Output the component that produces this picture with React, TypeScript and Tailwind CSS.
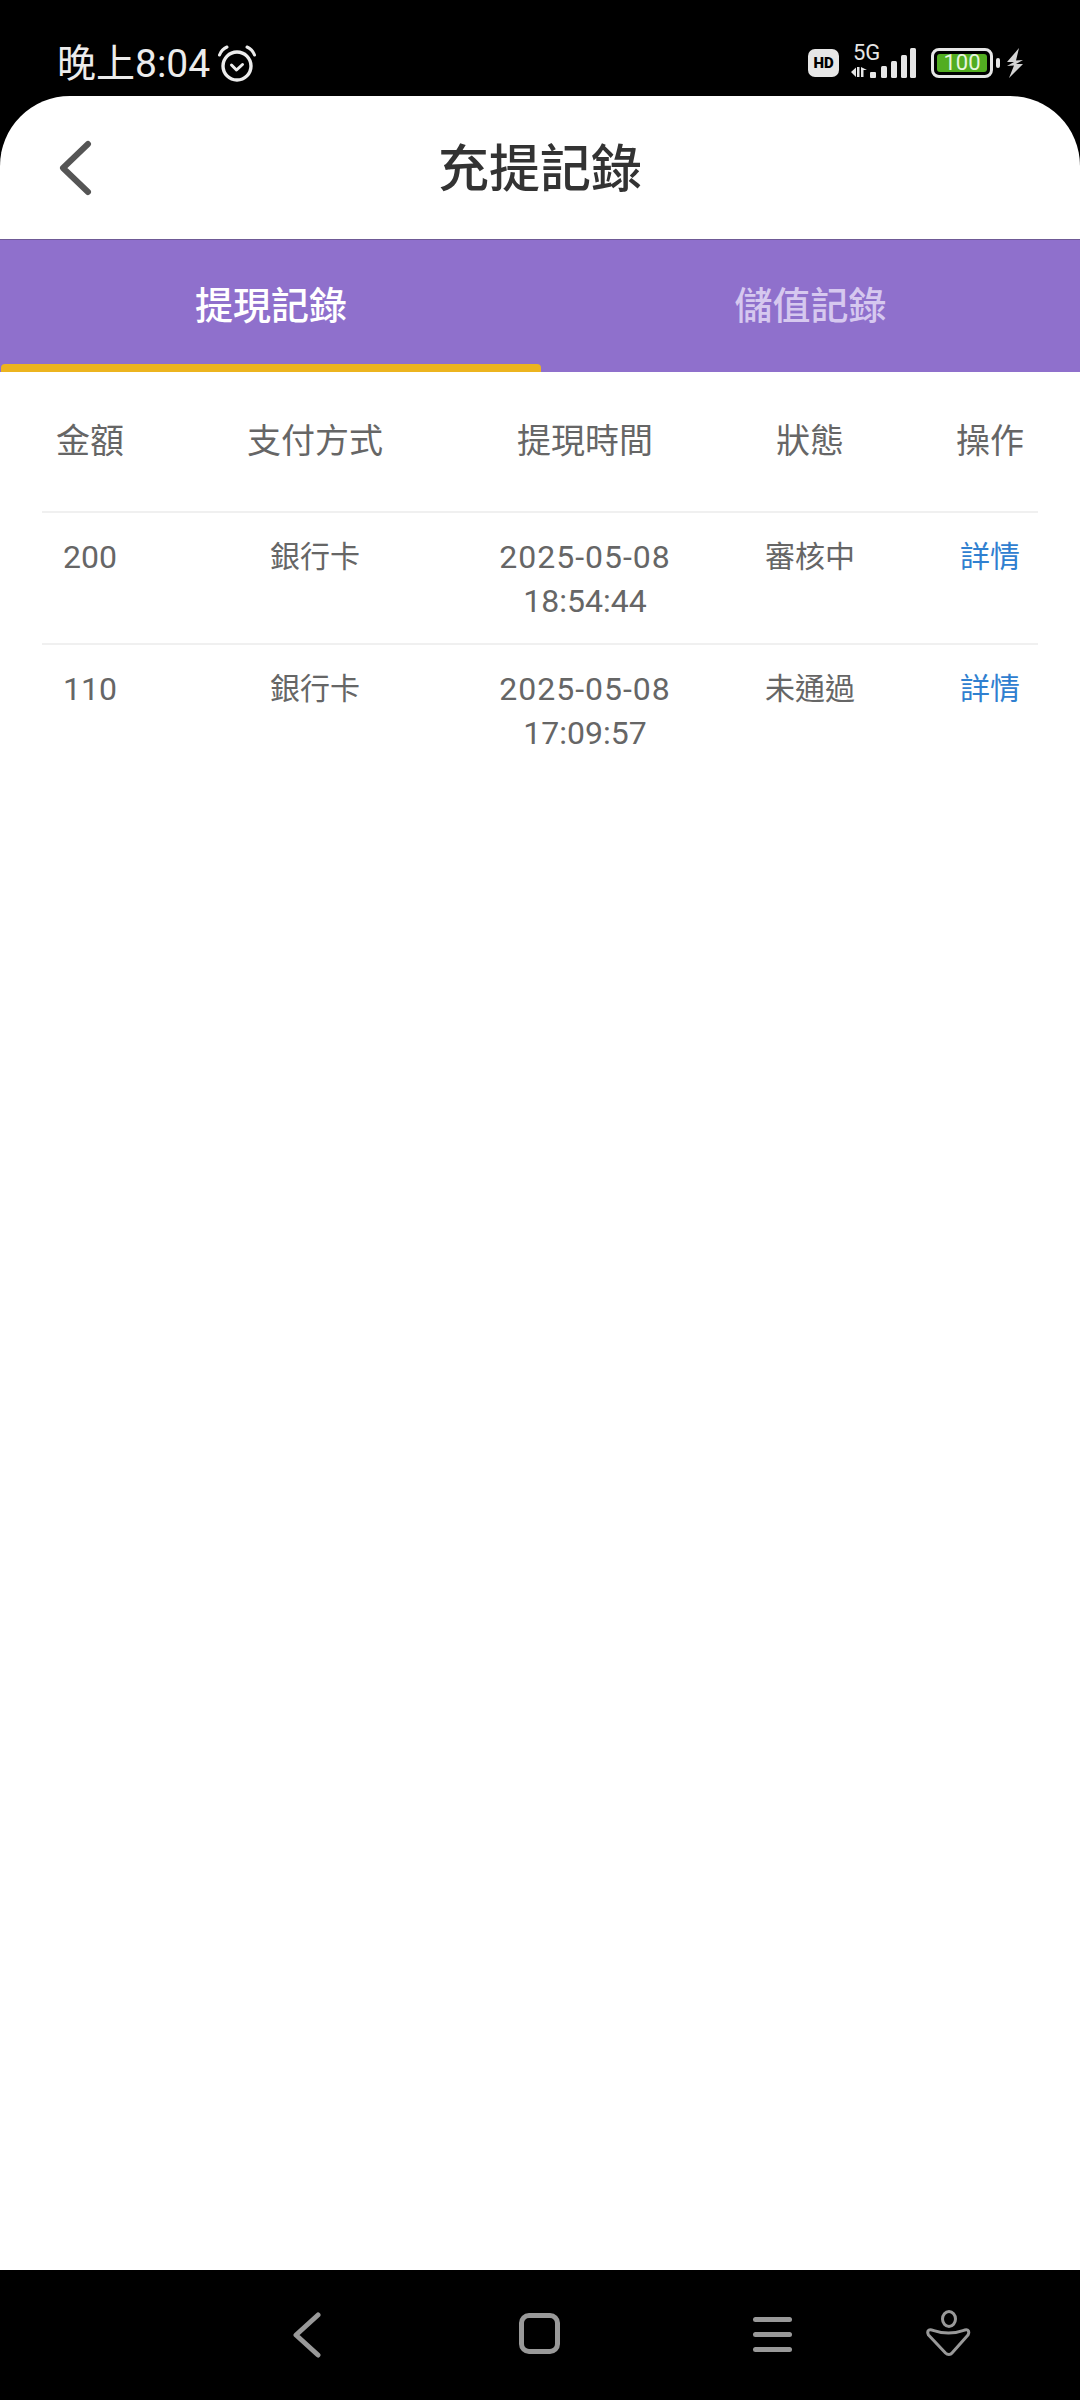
import React from 'react';

const FONT = 'font-["Roboto","Noto_Sans_CJK_TC",sans-serif]';

// status bar icons
const AlarmIcon = () => (
  <svg width="40" height="40" viewBox="0 0 40 40" fill="none" stroke="#ececec" strokeLinecap="round">
    <circle cx="20" cy="22" r="14" strokeWidth="3.4" />
    <path d="M14.500 21l5 5 6-5.500" strokeWidth="3" strokeLinejoin="round" />
    <path d="M2.500 11C4 7 6.500 4.500 10 3M37.500 11C36 7 33.500 4.500 30 3" strokeWidth="3" />
  </svg>
);

const SignalIcon = () => (
  <svg width="66" height="32" viewBox="0 0 66 32" fill="#e6e6e6">
    <path d="M0 25l5-4.500V30zM6 20v10h2.500V20zM10 20v10h2.500v-7h3.500z" />
    <rect x="19" y="25" width="6" height="6" rx="1" />
    <rect x="30" y="19" width="6" height="12" rx="1.500" />
    <rect x="40" y="14" width="6" height="17" rx="1.500" />
    <rect x="50" y="8" width="6" height="23" rx="1.500" />
    <rect x="59" y="1" width="6" height="30" rx="1.500" />
  </svg>
);

const BoltIcon = () => (
  <svg width="18" height="30" viewBox="0 0 18 30" fill="#d4d4d4">
    <path d="M13 0L1 14l7 0-7 4 7-.500L3 30 17 16l-7 0 7-4-7 .500z" />
  </svg>
);

const StatusBar = () => (
  <div className="h-[96px] shrink-0 flex items-start justify-between pl-[57px] pr-[56px] pt-[44px]">
    <div className="flex items-center gap-[7px]">
      <span className="text-[39px] leading-[38px] text-[#ececec]">晚上8:04</span>
      <AlarmIcon />
    </div>
    <div className="flex items-center pt-[3px]">
      <div className="w-[31px] h-[28px] rounded-[7px] bg-[#e6e6e6] flex items-center justify-center text-[15px] leading-none font-black text-black">
        HD
      </div>
      <div className="relative w-[66px] h-[32px] ml-[12px]">
        <SignalIcon />
        <span className="absolute left-[2px] top-[-4px] text-[22px] leading-[20px] text-[#e6e6e6]">5G</span>
      </div>
      <div className="ml-[14px] w-[62px] h-[30px] rounded-[8px] border-[3px] border-[#e6e6e6] p-[3px] flex">
        <div className="flex-1 rounded-[3px] bg-[#52ad21] flex items-center justify-center text-[22px] leading-none text-[#e8f6df]">
          100
        </div>
      </div>
      <div className="ml-[3px] w-[4px] h-[10px] rounded-[2px] bg-[#e6e6e6]" />
      <div className="ml-[6px] flex">
        <BoltIcon />
      </div>
    </div>
  </div>
);

const Header = () => (
  <div className="h-[144px] shrink-0 relative flex items-center justify-center border-b border-[#6f5a96] pt-[5px]">
    <svg className="absolute left-[58px] top-[44px]" width="34" height="56" viewBox="0 0 34 56" fill="none">
      <path d="M30 4L5 28l25 24" stroke="#555555" strokeWidth="6" strokeLinecap="round" strokeLinejoin="round" />
    </svg>
    <h1 className="text-[51px] leading-[60px] font-medium text-[#333333]">充提記錄</h1>
  </div>
);

const Tabs = () => (
  <div className="h-[132px] shrink-0 bg-[#8f70cc] flex">
    <div className="w-[541px] flex flex-col pl-[1px]">
      <div className="flex-1 flex items-center justify-center text-[38px] font-medium text-white pt-[9px]">提現記錄</div>
      <div className="h-[8px] rounded-t-[4px] bg-[#ecb41f]" />
    </div>
    <div className="flex-1 flex flex-col">
      <div className="flex-1 flex items-center justify-center text-[38px] font-medium text-[#d6c8ef] pt-[9px]">儲值記錄</div>
      <div className="h-[8px]" />
    </div>
  </div>
);

interface Record {
  amount: string;
  method: string;
  date: string;
  time: string;
  status: string;
}

const records: Record[] = [
  { amount: '200', method: '銀行卡', date: '2025-05-08', time: '18:54:44', status: '審核中' },
  { amount: '110', method: '銀行卡', date: '2025-05-08', time: '17:09:57', status: '未通過' },
];

const COLS = 'grid grid-cols-[92px_358px_182px_268px_92px]';

const RecordTable = () => (
  <div className="mx-[42px]">
    <div className={`${COLS} h-[139px] pl-[2px] items-center text-center text-[34px] text-[#666666]`}>
      <div>金額</div>
      <div>支付方式</div>
      <div className="whitespace-nowrap">提現時間</div>
      <div>狀態</div>
      <div>操作</div>
    </div>
    {records.map((r) => (
      <div key={r.amount} className={`${COLS} h-[132px] pl-[2px] border-t-2 border-[#f0f0f0] pt-[22px] text-center text-[30px] leading-[44px] text-[#666666]`}>
        <div className="text-[32px]">{r.amount}</div>
        <div>{r.method}</div>
        <div className="whitespace-nowrap text-[32px]">
          <span className="tracking-[1px]">{r.date}</span>
          <br />
          {r.time}
        </div>
        <div>{r.status}</div>
        <div className="text-[#2f80d0]">詳情</div>
      </div>
    ))}
  </div>
);

const NavBar = () => (
  <div className="h-[130px] shrink-0 bg-black flex items-start pt-[38px] pl-[290px]">
    <svg width="34" height="50" viewBox="0 0 34 50" fill="none" stroke="#999999" strokeWidth="5" strokeLinecap="round" strokeLinejoin="round">
      <path d="M28 7L6 27l22 20" />
    </svg>
    <div className="ml-[195px] mt-[5px] w-[41px] h-[41px] rounded-[10px] border-[5px] border-[#999999]" />
    <div className="ml-[193px] mt-[9px] w-[39px] flex flex-col gap-[10px]">
      <div className="h-[5px] rounded-full bg-[#999999]" />
      <div className="h-[5px] rounded-full bg-[#999999]" />
      <div className="h-[5px] rounded-full bg-[#999999]" />
    </div>
    <svg className="ml-[134px]" width="46" height="48" viewBox="0 0 46 48" fill="none" stroke="#999999" strokeWidth="3" strokeLinejoin="round">
      <ellipse cx="23" cy="11" rx="6.500" ry="7.500" />
      <path d="M3 22c-1.500 1-1.500 3-.500 5l17 18c2 2 5 2 6.500 0l16-18c1-2 1-4-.500-5-3-1.500-6 3-19 3s-16.500-4.500-19.500-3z" />
    </svg>
  </div>
);

export default function App() {
  return (
    <div className={`${FONT} w-[1080px] h-[2400px] bg-black flex flex-col`}>
      <StatusBar />
      <div className="flex-1 bg-white rounded-t-[70px] flex flex-col">
        <Header />
        <Tabs />
        <RecordTable />
      </div>
      <NavBar />
    </div>
  );
}
